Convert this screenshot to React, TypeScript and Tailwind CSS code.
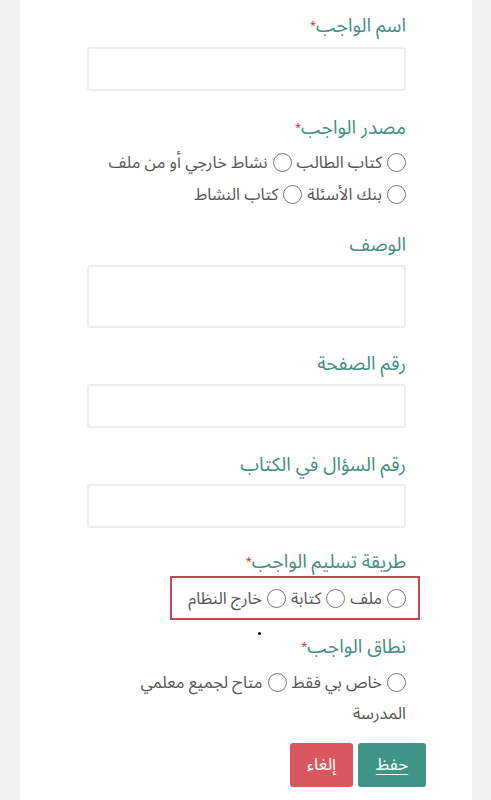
import React from "react";

const font = { fontFamily: '"Noto Sans Arabic", "DejaVu Sans", "Noto Sans", sans-serif' };

function Label({ text, required }: { text: string; required?: boolean }) {
  return (
    <div className="text-[19px] leading-[26px] text-[#3f8f80]">
      {text}
      {required && <span className="text-[#c9302c] text-[11px] align-top">*</span>}
    </div>
  );
}

function Circle() {
  return (
    <span className="inline-block align-middle w-[19px] h-[19px] rounded-full border-[1.5px] border-[#7a7a7a] bg-white ml-[5px]" />
  );
}

function Radio({ label }: { label: string }) {
  return (
    <span className="ml-[5px]">
      <Circle />
      <span className="align-middle">{label}</span>
    </span>
  );
}

function Input({ tall }: { tall?: boolean }) {
  return (
    <div
      className={
        "w-full border-2 border-[#ededed] rounded-[3px] bg-white " +
        (tall ? "h-[63px]" : "h-[44px]")
      }
    />
  );
}

export default function App() {
  return (
    <div dir="rtl" className="bg-[#f2f2f2] min-h-screen pl-[20px] pr-[19px]" style={font}>
      <div className="bg-white min-h-[800px] pr-[66px] pl-[67px] pt-[13px] text-[#555] text-[16.5px]">
        <Label text="اسم الواجب" required />
        <div className="mt-[8px]">
          <Input />
        </div>

        <div className="mt-[24px]">
          <Label text="مصدر الواجب" required />
        </div>
        <div className="mt-[7px] flex flex-col gap-[3px] leading-[28px]">
          <div>
            <Radio label="كتاب الطالب" />
            <Radio label="نشاط خارجي أو من ملف" />
          </div>
          <div>
            <Radio label="بنك الأسئلة" />
            <Radio label="كتاب النشاط" />
          </div>
        </div>

        <div className="mt-[24px]">
          <Label text="الوصف" />
        </div>
        <div className="mt-[7px]">
          <Input tall />
        </div>

        <div className="mt-[23px]">
          <Label text="رقم الصفحة" />
        </div>
        <div className="mt-[7px]">
          <Input />
        </div>

        <div className="mt-[24px]">
          <Label text="رقم السؤال في الكتاب" />
        </div>
        <div className="mt-[6px]">
          <Input />
        </div>

        <div className="mt-[21px]">
          <Label text="طريقة تسليم الواجب" required />
        </div>
        <div className="mt-[1px] -mr-[14px] flex">
          <div className="inline-flex items-center border-2 border-[#c9454f] h-[44px] pr-[12px] pl-[11px] leading-[28px]">
            <Radio label="ملف" />
            <Radio label="كتابة" />
            <Radio label="خارج النظام" />
          </div>
        </div>

        <div className="relative mt-[14px]">
          <span className="absolute left-[171px] top-[-2px] w-[3px] h-[3px] rounded-full bg-black" />
          <Label text="نطاق الواجب" required />
        </div>
        <div className="mt-[7px] leading-[30px]">
          <Radio label="خاص بي فقط" />
          <span className="ml-[5px]">
            <Circle />
            <span className="align-middle">متاح لجميع معلمي</span>
          </span>{" "}
          <span className="align-middle">المدرسة</span>
        </div>

        <div className="mt-[15px] -mr-[20px] flex gap-[5px]">
          <button className="w-[68px] h-[44px] rounded-[3px] bg-[#3e9585] text-white text-[17px] underline underline-offset-4">
            حفظ
          </button>
          <button className="w-[63px] h-[44px] rounded-[3px] bg-[#d9585f] text-white text-[17px]">
            إلغاء
          </button>
        </div>
      </div>
    </div>
  );
}
